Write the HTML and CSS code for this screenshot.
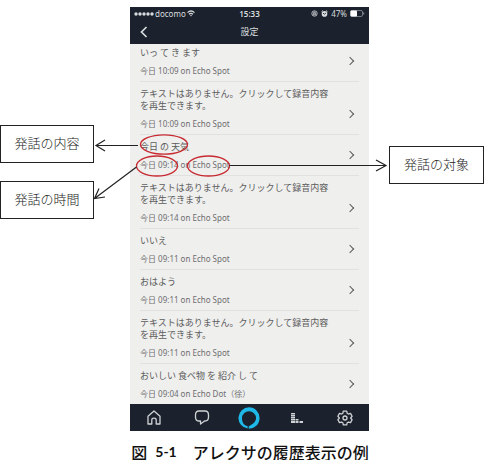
FILE: index.html
```html
<!DOCTYPE html>
<html lang="ja">
<head>
<meta charset="utf-8">
<meta name="viewport" content="width=device-width, initial-scale=1">
<title>アレクサの履歴表示の例</title>
<link rel="stylesheet" href="styles.css">
</head>
<body>
<figure class="figure">
  <div class="stage">
    <div class="labels labels-left">
      <div class="label">発話の内容</div>
      <div class="label">発話の時間</div>
    </div>
    <div class="phone">
      <header class="top">
        <div class="status">
          <div class="carrier">
            <svg class="signal" width="20" height="6" viewBox="0 0 20 6" fill="currentColor" aria-hidden="true"><circle cx="2" cy="3" r="1.7"/><circle cx="6" cy="3" r="1.7"/><circle cx="10" cy="3" r="1.7"/><circle cx="14" cy="3" r="1.7"/><circle cx="18" cy="3" r="1.7"/></svg>
            <span>docomo</span>
            <svg width="8" height="7" viewBox="0 0 8 7" fill="none" stroke="currentColor" stroke-width="1.2" aria-hidden="true"><path d="M.5 2.6Q4-.6 7.500 2.600M2 4.300Q4 2.500 6 4.300"/><path d="M3 5.300L4 6.600 5 5.300Q4 4.600 3 5.300Z" fill="currentColor" stroke="none"/></svg>
          </div>
          <strong class="clock">15:33</strong>
          <div class="power">
            <svg width="7" height="7" viewBox="0 0 7 7" fill="none" stroke="currentColor" stroke-width=".8" aria-hidden="true"><circle cx="3.500" cy="3.500" r="2.700"/><path d="M2.300 3.200h2.400v1.600H2.300zM2.800 3V2.300Q3.500 1.600 4.200 2.300V3"/></svg>
            <svg class="alarm" width="7" height="7" viewBox="0 0 7 7" aria-hidden="true"><circle cx="3.500" cy="3.900" r="2.800" fill="currentColor"/><path d="M.5 1.800L1.900.6M6.500 1.800L5.100.6" stroke="currentColor"/><path d="M2 3.200L3.500 4.200 5 3" fill="none" stroke="#1b222d" stroke-width=".8"/></svg>
            <span>47%</span>
            <svg width="15" height="7" viewBox="0 0 15 7" aria-hidden="true"><rect x=".5" y=".5" width="12" height="6" rx="1.500" fill="none" stroke="#8d9299" stroke-width=".8"/><rect x=".5" y=".5" width="6.500" height="6" rx="1" fill="#fff"/><path d="M13.700 2.500v2" stroke="#8d9299"/></svg>
          </div>
        </div>
        <div class="nav">
          <button class="back" type="button" aria-label="戻る"><svg width="8" height="12" viewBox="0 0 8 12" fill="none" stroke="currentColor" stroke-width="1.700" aria-hidden="true"><path d="M6.500 1L1.500 6l5 5"/></svg></button>
          <h1 class="heading">設定</h1>
        </div>
      </header>
      <ul class="history">
        <li><a class="entry" href="#"><span class="title">いっ て き ます</span><span class="meta">今日 10:09 on Echo Spot</span></a></li>
        <li><a class="entry" href="#"><span class="title">テキストはありません。クリックして録音内容を再生できます。</span><span class="meta">今日 10:09 on Echo Spot</span></a></li>
        <li><a class="entry" href="#"><span class="title">今日 の 天気</span><span class="meta">今日 09:14 on Echo Spot</span></a></li>
        <li><a class="entry" href="#"><span class="title">テキストはありません。クリックして録音内容を再生できます。</span><span class="meta">今日 09:14 on Echo Spot</span></a></li>
        <li><a class="entry" href="#"><span class="title">いいえ</span><span class="meta">今日 09:11 on Echo Spot</span></a></li>
        <li><a class="entry" href="#"><span class="title">おはよう</span><span class="meta">今日 09:11 on Echo Spot</span></a></li>
        <li><a class="entry" href="#"><span class="title">テキストはありません。クリックして録音内容を再生できます。</span><span class="meta">今日 09:11 on Echo Spot</span></a></li>
        <li><a class="entry" href="#"><span class="title">おいしい 食べ物 を 紹介 し て</span><span class="meta">今日 09:04 on Echo Dot（徐）</span></a></li>
      </ul>
      <nav class="tabs">
        <button class="tab" type="button" aria-label="ホーム"><svg width="14" height="15" viewBox="0 0 14 15" fill="none" stroke="currentColor" stroke-width="1.300" stroke-linejoin="round" aria-hidden="true"><path d="M1 6.200L7 1l6 5.200V14H9.200V10Q9.200 8.200 7 8.200T4.800 10v4H1z"/></svg></button>
        <button class="tab" type="button" aria-label="会話"><svg width="16" height="15" viewBox="0 0 16 15" fill="none" stroke="currentColor" stroke-width="1.300" stroke-linejoin="round" aria-hidden="true"><path d="M5 1h6q3.500 0 3.500 4v2q0 4-3.500 4h-.5L6.500 14V11H5q-3.500 0-3.500-4V5q0-4 3.500-4z"/></svg></button>
        <button class="tab" type="button" aria-label="アレクサ"><svg width="22" height="22" viewBox="0 0 22 22" aria-hidden="true"><path fill="#1eb9e8" fill-rule="evenodd" d="M11 .3A10.700 10.700 0 0 0 9.700 21.600V19.200A8 8 0 0 1 4 11.300A7 7 0 1 1 18 11.300C18 14.600 15 17.400 10.700 19.200V21.700A10.700 10.700 0 0 0 11 .3Z"/></svg></button>
        <button class="tab" type="button" aria-label="再生"><svg width="14" height="12" viewBox="0 0 14 12" fill="currentColor" aria-hidden="true"><path d="M1 1h4v1.500H1zM1 3h4v1.500H1zM1 5h4v1.500H1zM1 7h4v1.500H1zM1 9h4v2H1zM5.500 7h3v1.500h-3zM5.500 9h3v2h-3zM9.500 9h3.500v2H9.500z"/></svg></button>
        <button class="tab" type="button" aria-label="設定"><svg width="16" height="16" viewBox="0 0 16 16" fill="none" stroke="currentColor" stroke-width="1.300" stroke-linejoin="round" aria-hidden="true"><path d="M6.300 1.200h3.400l.5 2.100 1.200.7 2.100-.6 1.600 2.900-1.500 1.700 1.500 1.700-1.600 2.900-2.100-.6-1.200.7-.5 2.100H6.300l-.5-2.100-1.200-.7-2.100.6L.9 9.700 2.400 8 .9 6.300l1.600-2.900 2.100.6 1.200-.7z"/><circle cx="8" cy="8" r="2"/></svg></button>
      </nav>
    </div>
    <div class="labels labels-right">
      <div class="label">発話の対象</div>
    </div>
    <svg class="marks" viewBox="0 0 484 424" preserveAspectRatio="none" fill="none" aria-hidden="true">
      <g stroke="#c72a30" stroke-width="1.300">
        <ellipse cx="164" cy="137.500" rx="23.500" ry="9.700"/>
        <ellipse cx="157" cy="159" rx="20.500" ry="10"/>
        <ellipse cx="208.500" cy="159" rx="21" ry="10"/>
      </g>
      <g stroke="#222" stroke-width="1.200">
        <path d="M138 138.500H96M105 133L96 138.500L105 144"/>
        <path d="M136.500 160L94.500 191.500M99 181.500L94.500 191.500L105 190"/>
        <path d="M229.500 158.500H386M376 153L386 158.500L376 164"/>
      </g>
    </svg>
  </div>
  <figcaption class="caption"><span>図</span><b class="number">5-1</b><span>アレクサの履歴表示の例</span></figcaption>
</figure>
</body>
</html>
```
FILE: styles.css
```css
* {
  box-sizing: border-box;
}

body {
  margin: 0;
  background: #fff;
  color: #222;
  font-family: "Noto Sans", "Noto Sans CJK JP", sans-serif;
}

.figure {
  margin: 0;
  padding-top: 7px;
}

.stage {
  position: relative;
  display: grid;
  grid-template-columns: 94fr 36fr 239fr 20fr 95fr;
}

.labels {
  display: flex;
  flex-direction: column;
  gap: 18px;
}

.labels-left {
  grid-column: 1;
  padding-top: 118px;
}

.labels-right {
  grid-column: 5;
  padding-top: 139px;
}

.label {
  border: 1px solid #222;
  padding: 7px 0 9px;
  font-family: "Noto Sans CJK JP", sans-serif;
  font-weight: 300;
  font-size: 13px;
  line-height: 20px;
  text-align: center;
}

.phone {
  grid-column: 3;
  grid-row: 1;
  background: #efefee;
}

.top,
.tabs {
  background: #1b222d;
  color: #d9dcdf;
}

.status {
  display: grid;
  grid-template-columns: 1fr auto 1fr;
  align-items: center;
  height: 13px;
  padding: 0 4px;
  font-size: 8px;
  line-height: 12px;
}

.status svg {
  display: block;
}

.carrier,
.power {
  display: flex;
  align-items: center;
  gap: 1px;
}

.power {
  justify-content: flex-end;
  gap: 3px;
}

.clock {
  font-weight: 600;
}

.nav {
  display: grid;
  grid-template-columns: 32px 1fr 32px;
  align-items: center;
  height: 24px;
}

.back {
  display: flex;
  padding: 0 0 0 10px;
  border: 0;
  background: none;
  color: inherit;
}

.heading {
  margin: 0;
  font-size: 9px;
  font-weight: 400;
  line-height: 12px;
  text-align: center;
}

.history {
  margin: 0;
  padding: 0 10px;
  list-style: none;
}

.history li + li {
  border-top: 1px solid #e1e1e0;
}

.history li:first-child .entry {
  padding-top: 3px;
}

.entry {
  position: relative;
  display: flex;
  flex-direction: column;
  gap: 6px;
  padding: 6px 24px 4px 0;
  color: #6e6e6e;
  font-size: 9px;
  line-height: 12px;
  text-decoration: none;
}

.entry::after {
  content: "";
  position: absolute;
  right: 6px;
  bottom: 17px;
  width: 5px;
  height: 5px;
  border: solid #5c5c5c;
  border-width: 1px 1px 0 0;
  transform: rotate(45deg);
}

.title {
  color: #5c5c5c;
  font-family: "Noto Sans CJK JP", sans-serif;
}

.meta {
  font-size: 8px;
}

.tabs {
  display: grid;
  grid-template-columns: repeat(5, 1fr);
  height: 27px;
}

.tab {
  display: flex;
  align-items: center;
  justify-content: center;
  padding: 0;
  border: 0;
  background: none;
  color: #cfd3d6;
}

.marks {
  position: absolute;
  top: 0;
  left: 0;
  width: 100%;
  height: 100%;
  pointer-events: none;
}

.caption {
  display: flex;
  justify-content: center;
  padding-top: 13px;
  padding-left: 16px;
  font-family: "Noto Sans CJK JP", sans-serif;
  font-size: 16px;
  font-weight: 500;
  line-height: 16px;
  color: #111;
}

.number {
  margin: 0 16px 0 8px;
  font-family: Lato, sans-serif;
  font-size: 14px;
}
```
